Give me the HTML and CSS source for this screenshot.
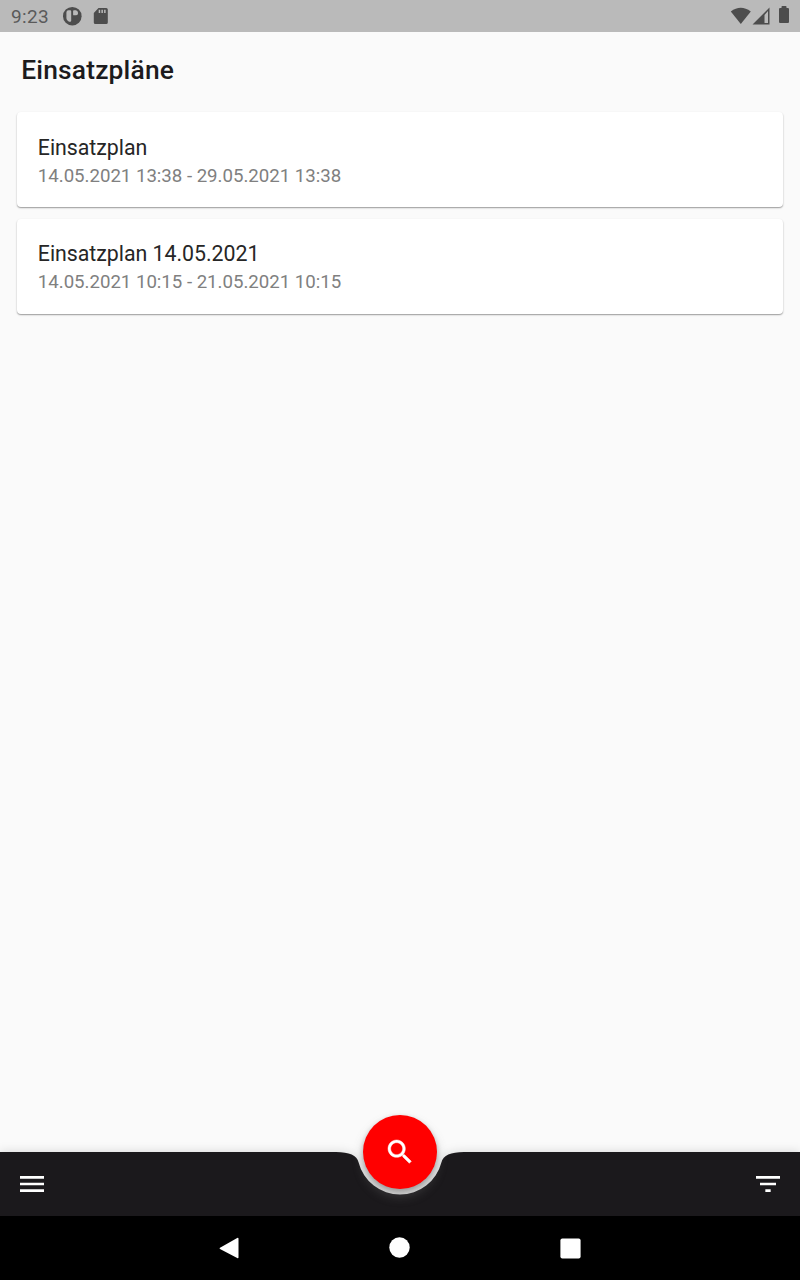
FILE: index.html
```html
<!DOCTYPE html>
<html lang="de">
<head>
<meta charset="utf-8">
<title>Einsatzpläne</title>
<link rel="stylesheet" href="styles.css">
</head>
<body>
<div class="screen">
  <header class="status">
    <span class="clock">9:23</span>
    <svg class="notice" width="20" height="20" viewBox="0 0 20 20"><circle cx="10.300" cy="10.200" r="9.3"/><path class="cutout" d="M6.500 4.200h1.700q1 0 1 1v9.500q0 1-1 1H7q-2.600-1.200-2.600-3.500V6.500q0-2.300 2.100-2.300ZM12 4.200h2q2 .5 2 2.500v.8q0 1.800-1.800 1.800H12q-.9 0-.9-.9V5.100q0-.9.9-.9Z"/></svg>
    <svg class="sdcard" width="16" height="18" viewBox="0 0 16 18"><path fill-rule="evenodd" d="M5.500 1h7.700q1.600 0 1.600 1.600v12.800q0 1.600-1.600 1.600H2.400Q.8 17 .8 15.400V6ZM5.700 2.700v3.200h1.500V2.700ZM8.400 2.700v3.200h1.500V2.700ZM11.100 2.700v3.200h1.500V2.700Z"/></svg>
    <svg class="system" width="60" height="20" viewBox="0 0 60 20"><path d="M.8 5.500Q10.700-2 20.800 5.500L10.800 18Z"/><path fill-rule="evenodd" d="M39.500 1.500v17H22.500ZM34.500 9v8.100h3.500V5Z"/><path d="M51.500 2V.8q0-.8.8-.8h3.400q.8 0 .8.800V2h1.400q1.100 0 1.100 1.100v12.800q0 1.100-1.100 1.100h-7.800Q49 17 49 15.900V3.100Q49 2 50.100 2Z"/></svg>
  </header>
  <main class="content">
    <h1 class="title">Einsatzpläne</h1>
    <section class="plans">
      <article class="card">
        <h2 class="name">Einsatzplan</h2>
        <p class="period">14.05.2021 13:38 - 29.05.2021 13:38</p>
      </article>
      <article class="card card-compact">
        <h2 class="name">Einsatzplan 14.05.2021</h2>
        <p class="period">14.05.2021 10:15 - 21.05.2021 10:15</p>
      </article>
    </section>
  </main>
  <footer class="appbar">
    <svg class="bar-shape" width="800" height="64" viewBox="0 0 800 64"><path d="M0 0H336Q356 0 358.630 10.400A42.670 42.670 0 0 0 441.370 10.400Q444 0 464 0H800V64H0Z"/></svg>
    <svg class="bar-icon" width="32" height="32" viewBox="0 0 24 24"><path d="M3 18h18v-2H3v2zm0-5h18v-2H3v2zm0-7v2h18V6H3z"/></svg>
    <button class="fab" aria-label="Suchen"><svg width="32" height="32" viewBox="0 0 24 24"><path d="M15.500 14h-.79l-.28-.27C15.410 12.590 16 11.110 16 9.500 16 5.910 13.090 3 9.500 3S3 5.910 3 9.500 5.910 16 9.500 16c1.610 0 3.090-.59 4.230-1.570l.27.28v.79l5 4.990L20.490 19l-4.990-5zm-6 0C7.010 14 5 11.990 5 9.500S7.010 5 9.500 5 14 7.010 14 9.500 11.990 14 9.500 14z"/></svg></button>
    <svg class="bar-icon" width="32" height="32" viewBox="0 0 24 24"><path d="M10 18h4v-2h-4v2zM3 6v2h18V6H3zm3 7h12v-2H6v2z"/></svg>
  </footer>
  <nav class="navbar">
    <svg width="24" height="24" viewBox="0 0 24 24"><path d="M3 11.700 20.200 1.900Q21.500 1.300 21.500 2.700V21.300Q21.500 22.700 20.200 22L3 12.900Q2 12.300 3 11.700Z"/></svg>
    <svg width="24" height="24" viewBox="0 0 24 24"><circle cx="11.500" cy="11.500" r="10.200"/></svg>
    <svg width="24" height="24" viewBox="0 0 24 24"><rect x="1.400" y="2.400" width="20.200" height="20.200" rx="2"/></svg>
  </nav>
</div>
</body>
</html>
```
FILE: styles.css
```css
* { box-sizing: border-box; }
body { margin: 0; font-family: Roboto, sans-serif; }
.screen { display: flex; flex-direction: column; width: 800px; height: 1280px; overflow: hidden; background: #fafafa; }
.status { display: flex; align-items: center; height: 32px; padding: 0 10px 0 11px; background: #bababa; color: #5a5a5a; fill: #4d4d4d; }
.clock { width: 51px; padding-top: 1px; font-size: 19px; line-height: 32px; letter-spacing: .35px; }
.cutout { fill: #bababa; }
.sdcard { margin-left: 11px; }
.system { margin: -1px 0 0 auto; height: 20px; }
.content { flex: 1; }
.title { margin: 0; padding: 22px 21.3px 0; height: 80px; font-size: 26.4px; line-height: 32px; font-weight: 500; letter-spacing: .16px; color: #1c1b1d; }
.plans { display: flex; flex-direction: column; gap: 12px; padding: 0 17px; }
.card { height: 95px; padding: 22px 20.8px 0; border-radius: 4px; background: #fff; box-shadow: 0 1px 2px rgba(0,0,0,.24), 0 1px 1px rgba(0,0,0,.18); }
.card-compact { padding-top: 21px; }
.name { margin: 0; font-size: 21.33px; line-height: 27px; font-weight: 400; letter-spacing: -.03px; color: #262626; }
.period { margin: 0; padding-top: 2px; font-size: 18.67px; line-height: 26px; letter-spacing: -.02px; color: #808080; }
.appbar { position: relative; display: flex; align-items: center; justify-content: space-between; height: 64px; padding: 0 16px; }
.bar-shape { position: absolute; top: 0; left: 0; overflow: visible; fill: #1b191c; filter: drop-shadow(0 -1px 5px rgba(0,0,0,.12)); }
.bar-icon { position: relative; fill: #fff; }
.fab { position: absolute; top: -37.3px; left: 362.7px; display: flex; align-items: center; justify-content: center; width: 74.7px; height: 74.7px; padding: 0; border: 0; border-radius: 50%; background: #f00; fill: #fff; stroke: #fff; stroke-width: .35; box-shadow: 0 2px 5px rgba(0,0,0,.22), 0 7px 11px rgba(110,110,110,.42); }
.navbar { display: flex; align-items: center; justify-content: center; gap: 147px; height: 64px; background: #000; fill: #fff; }
```
